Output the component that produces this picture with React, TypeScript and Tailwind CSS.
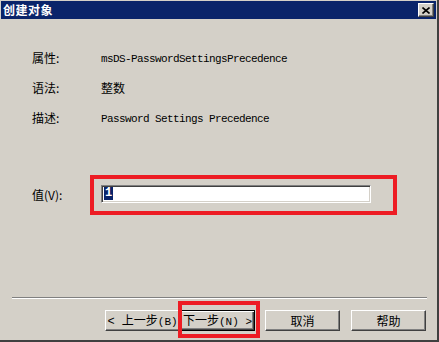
import React from 'react';

const cjk = "font-['Noto_Sans_CJK_SC','Noto_Sans',sans-serif]";
const mono = "font-['Liberation_Mono','Noto_Sans_CJK_SC',monospace]";

const btnBase =
  'h-[21px] w-[75px] bg-[#d4d0c8] flex items-center justify-center text-[12px] text-black leading-none whitespace-pre';
const raised =
  'border border-t-white border-l-white border-r-[#404040] border-b-[#404040] shadow-[inset_-1px_-1px_0_#808080]';

const Field: React.FC<{ label: string; children: React.ReactNode }> = ({ label, children }) => (
  <div className="flex items-center h-[16px]">
    <div className={`w-[69px] text-[12px] text-black ${cjk}`}>{label}</div>
    <div className="text-[12px] text-black">{children}</div>
  </div>
);

export default function App() {
  return (
    <div className="w-[439px] h-[342px] bg-[#d4d0c8] border-r-2 border-b-2 border-r-[#404040] border-b-[#404040] pt-px pl-px overflow-hidden">
      {/* title bar */}
      <div className="h-[18px] w-[435px] bg-[#0a246a] flex items-center justify-between pl-[2px] pr-[2px]">
        <span className={`text-white font-bold text-[12px] tracking-[0.5px] leading-none ${cjk}`}>创建对象</span>
        <div className={`w-[16px] h-[14px] bg-[#d4d0c8] flex items-center justify-center ${raised}`}>
          <svg width="8" height="7" viewBox="0 0 8 7">
            <path d="M0.5 0.5 L7.5 6.5 M7.5 0.5 L0.5 6.5" stroke="#000" strokeWidth="1.6" />
          </svg>
        </div>
      </div>

      <div className="pl-[31px] mt-[31px] flex flex-col gap-[14px]">
        <Field label="属性:">
          <span className={`${mono} text-[11px] tracking-[-0.6px]`}>msDS-PasswordSettingsPrecedence</span>
        </Field>
        <Field label="语法:">
          <span className={cjk}>整数</span>
        </Field>
        <Field label="描述:">
          <span className={`${mono} text-[11px] tracking-[-0.6px]`}>Password Settings Precedence</span>
        </Field>
      </div>

      {/* value row */}
      <div className="pl-[31px] mt-[49px] flex items-center">
        <div className={`w-[58px] text-[12px] text-black ${cjk}`}>值(V):</div>
        <div className="w-[307px] h-[40px] border-4 border-[#ed1c24] pl-[7px] pt-[6px]">
          <div className="w-[270px] h-[18px] bg-white border border-t-[#808080] border-l-[#808080] border-r-white border-b-white shadow-[inset_1px_1px_0_#404040,inset_-1px_-1px_0_#d4d0c8] pl-[2px] pt-[1px] flex items-start">
            <span className={`block bg-[#0a246a] text-white text-[12px] leading-[13px] px-[1px] font-bold ${mono}`}>1</span>
          </div>
        </div>
      </div>

      {/* separator */}
      <div className="ml-[11px] mt-[82px] w-[415px] h-[2px] border-t border-t-[#808080] border-b border-b-white" />

      {/* buttons */}
      <div className={`ml-[104px] mt-[11px] flex items-center ${cjk}`}>
        <button className={`${btnBase} ${raised}`}>
          <span>
            <span className={mono}>{'< '}</span>上一步<span className={`${mono} text-[11px]`}>(B)</span>
          </span>
        </button>
        <div className="relative">
          <button className={`${btnBase} border border-black shadow-[inset_1px_1px_0_#fff,inset_-1px_-1px_0_#404040,inset_-2px_-2px_0_#808080]`}>
            <span>
              下一步<span className={`${mono} text-[11px]`}>{'(N) >'}</span>
            </span>
          </button>
          <div className="absolute -left-[2px] -top-[9px] w-[82px] h-[37px] border-4 border-[#ed1c24] pointer-events-none" />
        </div>
        <button className={`${btnBase} ${raised} ml-[10px]`}>取消</button>
        <button className={`${btnBase} ${raised} ml-[11px]`}>帮助</button>
      </div>
    </div>
  );
}
